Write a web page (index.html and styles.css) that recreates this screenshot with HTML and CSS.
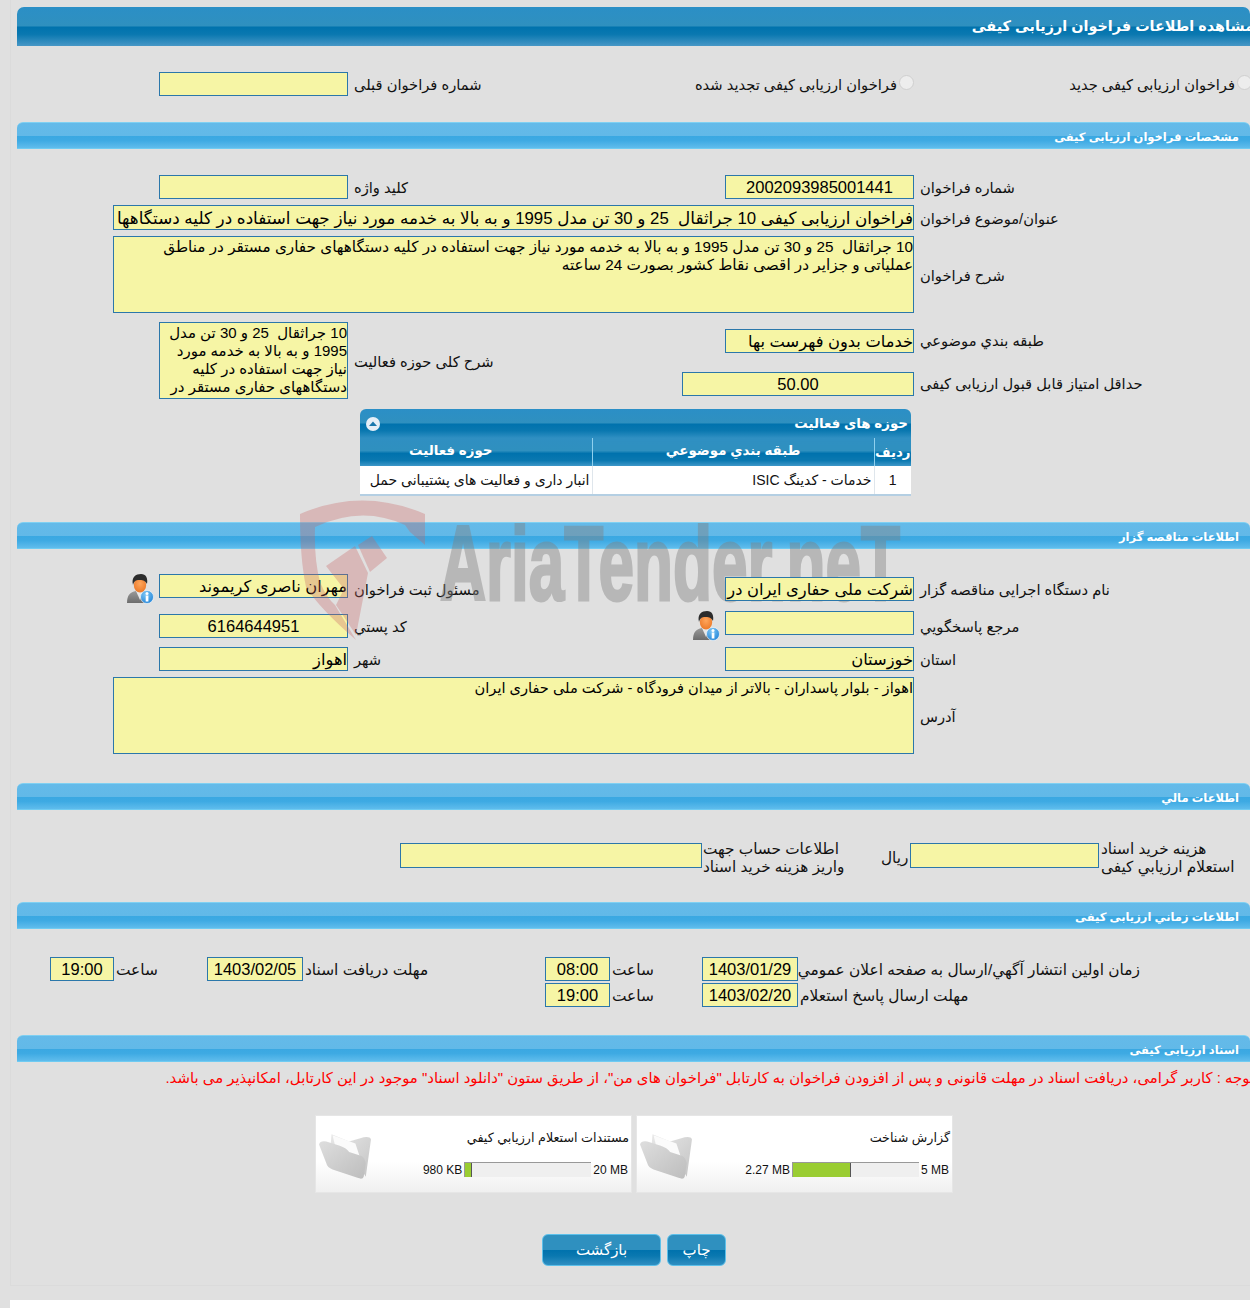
FILE: index.html
```html
<!DOCTYPE html>
<html lang="fa">
<head>
<meta charset="utf-8">
<title>مشاهده اطلاعات فراخوان ارزیابی کیفی</title>
<link rel="stylesheet" href="styles.css">
</head>
<body>
<svg width="0" height="0" class="defs">
  <defs>
    <linearGradient id="folderBack" x1="0" y1="0" x2="1" y2="1"><stop offset="0" stop-color="#e8e8e8"/><stop offset="1" stop-color="#c4c4c4"/></linearGradient>
    <linearGradient id="folderFront" x1="0" y1="0" x2="1" y2="1"><stop offset="0" stop-color="#dedede"/><stop offset="1" stop-color="#bdbdbd"/></linearGradient>
    <radialGradient id="face" cx=".5" cy=".4" r=".6"><stop offset="0" stop-color="#ffa65c"/><stop offset="1" stop-color="#ec7a2a"/></radialGradient>
    <linearGradient id="suit" x1="0" y1="0" x2="0" y2="1"><stop offset="0" stop-color="#9a9a9a"/><stop offset="1" stop-color="#6c6c6c"/></linearGradient>
    <radialGradient id="info" cx=".4" cy=".3" r=".8"><stop offset="0" stop-color="#7cc6f5"/><stop offset="1" stop-color="#1c7fd6"/></radialGradient>
    <symbol id="person" viewBox="0 0 28 30">
      <path d="M1 29 C1 21 4 18 10 17 L18 17 C22 18 23 21 23 29 Z" fill="url(#suit)"/>
      <path d="M10 17 L14 26 L17 17 Z" fill="#e8e8e8"/>
      <ellipse cx="14" cy="11" rx="6.2" ry="7.5" fill="url(#face)"/>
      <path d="M7 11 C5 3 10 0 15 0 C20 0 22 4 21 10 C19 6 16 6 13 6 C10 6 8 7 7 11 Z" fill="#2c2c2c"/>
      <circle cx="21" cy="23" r="6.5" fill="url(#info)" stroke="#fff" stroke-width=".6"/>
      <rect x="19.7" y="21.5" width="2.7" height="6" fill="#fff"/>
      <circle cx="21" cy="19.4" r="1.5" fill="#fff"/>
    </symbol>
    <symbol id="folder" viewBox="0 0 52 46">
      <path d="M13 3 L30 10 L44 6 Q50 5 51 8 L46 44 L40 34 L12 16 Z" fill="url(#folderBack)"/>
      <path d="M14 4 L36 12 L42 30 L18 20 Z" fill="#fbfbfb"/>
      <path d="M1 13 Q2 9 8 10 L21 14 Q27 16 30 20 L42 24 Q45 26 46 31 L44 44 Q43 47 38 45 L14 37 Q9 35 8 31 Z" fill="url(#folderFront)"/>
    </symbol>
  </defs>
</svg>

<main class="panel">
  <h1 class="titlebar">مشاهده اطلاعات فراخوان ارزیابی کیفی</h1>

  <div class="form intro">
    <div class="field f-189 c1">&nbsp;</div>
    <div class="label c2">شماره فراخوان قبلی</div>
    <div class="option c3"><span class="radio"></span><span class="optext">فراخوان ارزیابی کیفی تجدید شده</span></div>
    <div class="option c4"><span class="radio"></span><span class="optext">فراخوان ارزیابی کیفی جدید</span></div>
  </div>

  <h2 class="bar bar-a">مشخصات فراخوان ارزیابی کیفی</h2>

  <div class="form row-a">
    <div class="field f-189 c1">&nbsp;</div>
    <div class="label c2">کلید واژه</div>
    <div class="field f-189 c3 center">2002093985001441</div>
    <div class="label c4">شماره فراخوان</div>
  </div>
  <div class="form row-b">
    <div class="field f-wide span3">فراخوان ارزیابی کیفی 10 جراثقال&nbsp; 25 و 30 تن مدل 1995 و به بالا به خدمه مورد نیاز جهت استفاده در کلیه دستگاهها</div>
    <div class="label c4">عنوان/موضوع فراخوان</div>
  </div>
  <div class="form row-c">
    <div class="area f-wide span3">10 جراثقال&nbsp; 25 و 30 تن مدل 1995 و به بالا به خدمه مورد نیاز جهت استفاده در کلیه دستگاههای حفاری مستقر در مناطق<br>عملیاتی و جزایر در اقصی نقاط کشور بصورت 24 ساعته</div>
    <div class="label c4">شرح فراخوان</div>
  </div>
  <div class="form row-d">
    <div class="area f-189 c1 rows2">10 جراثقال&nbsp; 25 و 30 تن مدل<br>1995 و به بالا به خدمه مورد<br>نیاز جهت استفاده در کلیه<br>دستگاههای حفاری مستقر در</div>
    <div class="label c2 rows2">شرح کلی حوزه فعالیت</div>
    <div class="field f-189 c3 strong">خدمات بدون فهرست بها</div>
    <div class="label c4 lab-up">طبقه بندي موضوعي</div>
    <div class="field f-232 c3 center">50.00</div>
    <div class="label c4 lab-down">حداقل امتیاز قابل قبول ارزیابی کیفی</div>
  </div>

  <section class="activity">
    <div class="activity-head">
      <span class="collapse"><svg viewBox="0 0 14 14" width="14" height="14"><circle cx="7" cy="7" r="7" fill="#e6eff7"/><path d="M3 9 L7 4.5 L11 9 Z" fill="#1b78ad"/></svg></span>
      <span>حوزه های فعالیت</span>
    </div>
    <table class="activity-table">
      <thead><tr><th class="col-area">حوزه فعالیت</th><th class="col-class">طبقه بندي موضوعي</th><th class="col-num">ردیف</th></tr></thead>
      <tbody><tr><td class="col-area">انبار داری و فعالیت های پشتیبانی حمل</td><td class="col-class">خدمات - کدینگ ISIC</td><td class="col-num">1</td></tr></tbody>
    </table>
  </section>

  <h2 class="bar bar-b">اطلاعات مناقصه گزار</h2>

  <div class="form row-e">
    <div class="with-icon c1"><svg class="person"><use href="#person"/></svg><div class="field f-189 strong">مهران ناصری کریموند</div></div>
    <div class="label c2">مسئول ثبت فراخوان</div>
    <div class="with-icon c3"><div class="field f-189 strong nudge">شرکت ملی حفاری ایران در</div></div>
    <div class="label c4">نام دستگاه اجرایی مناقصه گزار</div>
  </div>
  <div class="form row-f">
    <div class="with-icon c1"><div class="field f-189 center nudge">6164644951</div></div>
    <div class="label c2">کد پستي</div>
    <div class="with-icon c3"><svg class="person"><use href="#person"/></svg><div class="field f-189">&nbsp;</div></div>
    <div class="label c4">مرجع پاسخگويي</div>
  </div>
  <div class="form row-g">
    <div class="field f-189 c1 strong">اهواز</div>
    <div class="label c2">شهر</div>
    <div class="field f-189 c3 strong">خوزستان</div>
    <div class="label c4">استان</div>
  </div>
  <div class="form row-h">
    <div class="area f-wide span3">اهواز - بلوار پاسداران - بالاتر از میدان فرودگاه - شرکت ملی حفاری ایران</div>
    <div class="label c4">آدرس</div>
  </div>

  <h2 class="bar bar-c">اطلاعات مالي</h2>

  <div class="finance">
    <div class="field">&nbsp;</div>
    <div class="label">اطلاعات حساب جهت<br>واریز هزینه خرید اسناد</div>
    <div class="label">ریال</div>
    <div class="field">&nbsp;</div>
    <div class="label">هزینه خرید اسناد<br>استعلام ارزیابي کیفی</div>
  </div>

  <h2 class="bar bar-d">اطلاعات زماني ارزیابی کیفی</h2>

  <div class="dates dates-first">
    <div class="field center">19:00</div>
    <div class="label">ساعت</div>
    <div class="field center">1403/02/05</div>
    <div class="label">مهلت دریافت اسناد</div>
    <div class="field center">08:00</div>
    <div class="label">ساعت</div>
    <div class="field center">1403/01/29</div>
    <div class="label">زمان اولین انتشار آگهي/ارسال به صفحه اعلان عمومي</div>
  </div>
  <div class="dates dates-second">
    <div class="blank"></div>
    <div class="blank"></div>
    <div class="blank"></div>
    <div class="blank"></div>
    <div class="field center">19:00</div>
    <div class="label">ساعت</div>
    <div class="field center">1403/02/20</div>
    <div class="label">مهلت ارسال پاسخ استعلام</div>
  </div>

  <h2 class="bar bar-e">اسناد ارزیابی کیفی</h2>

  <p class="notice">توجه : کاربر گرامی، دریافت اسناد در مهلت قانونی و پس از افزودن فراخوان به کارتابل "فراخوان های من"، از طریق ستون "دانلود اسناد" موجود در این کارتابل، امکانپذیر می باشد.</p>

  <div class="cards">
    <article class="card">
      <svg class="folder"><use href="#folder"/></svg>
      <div class="card-title">مستندات استعلام ارزیابي کیفي</div>
      <div class="meter"><span class="used">980 KB</span><span class="track"><span class="fill" style="width:5%"></span></span><span class="max">20 MB</span></div>
    </article>
    <article class="card">
      <svg class="folder"><use href="#folder"/></svg>
      <div class="card-title">گزارش شناخت</div>
      <div class="meter"><span class="used">2.27 MB</span><span class="track"><span class="fill" style="width:46%"></span></span><span class="max">5 MB</span></div>
    </article>
  </div>

  <div class="actions">
    <button class="btn btn-back" type="button">بازگشت</button>
    <button class="btn btn-print" type="button">چاپ</button>
  </div>
</main>
<div class="page-end"></div>

<svg class="mark-text" viewBox="0 0 470 90">
  <text x="0" y="77" textLength="460" lengthAdjust="spacingAndGlyphs">AriaTender.neT</text>
</svg>
<svg class="mark-shield" viewBox="0 0 126 142">
  <path d="M0 15 Q62 -12 125 15 L125 46 L110 33 L105 26 Q62 6 15 28 Q14 60 20 83 Q26 98 35 106 L56 141 Q20 110 6 88 Q0 60 0 15 Z"/>
  <path d="M58 46 L72 37 L87 59 L70 73 Z"/>
  <path d="M26 67 L55 47 L68 74 L56 136 L36 106 L44 90 Z"/>
</svg>
</body>
</html>
```
FILE: styles.css
```css
html, body { margin: 0; padding: 0; }
html { overflow: hidden; height: 1308px; }
body {
  position: relative;
  width: 1250px;
  height: 1308px;
  overflow: hidden;
  background: #e0e0e0;
  color: #111;
  font-family: "Liberation Sans", "DejaVu Sans", sans-serif;
  font-size: 14px;
}
.defs { position: absolute; }

.panel {
  box-sizing: border-box;
  width: 1240px;
  height: 1286px;
  margin-left: 10px;
  padding: 7px 0 0 7px;
  border-left: 1px solid #dbdbdb;
  border-bottom: 1px solid #dbdbdb;
}
.page-end { height: 8px; margin: 14px 0 0 10px; background: #fff; }

.titlebar {
  box-sizing: border-box;
  width: 1233px;
  height: 39px;
  margin: 0 0 0 -1px;
  padding: 11px 0 0;
  direction: rtl;
  white-space: nowrap;
  text-indent: -4px;
  color: #fff;
  font-size: 14.4px;
  font-weight: bold;
  border-radius: 7px 7px 0 0;
  background: linear-gradient(#2b8fc6 0, #2f90bf 49%, #0072ad 51%, #0a78b0 70%, #4797c6 100%);
}

.bar {
  position: relative;
  box-sizing: border-box;
  width: 1233px;
  height: 27px;
  margin: 0 0 0 -1px;
  padding: 7px 11px 0 0;
  direction: rtl;
  color: #fff;
  font-size: 11.5px;
  font-weight: bold;
  border-top: 1px solid #7fd0f2;
  border-bottom: 1px solid #6fcbf2;
  border-radius: 6px 6px 0 0;
  background: linear-gradient(#64bae9 0, #62b9e8 50%, #3aa8e2 52%, #3eaae3 70%, #5fbcec 100%);
}
.bar-a { margin-top: 26px; }
.bar-b { margin-top: 26px; }
.bar-c { margin-top: 29px; }
.bar-d { margin-top: 28px; }
.bar-e { margin-top: 28px; }

.form {
  display: grid;
  grid-template-columns: 331px 200px 354px 330px;
  column-gap: 6px;
  margin-left: -1px;
}
.c1 { grid-column: 1; justify-self: end; }
.c2 { grid-column: 2; }
.c3 { grid-column: 3; justify-self: end; }
.c4 { grid-column: 4; }
.span3 { grid-column: 1 / 4; justify-self: end; }
.rows2 { grid-row: 1 / 3; }

.intro { margin-top: 26px; height: 24px; }
.row-a { margin-top: 26px; height: 24px; }
.row-b { margin-top: 6px; height: 25px; }
.row-c { margin-top: 6px; height: 77px; }
.row-d { margin-top: 9px; grid-template-rows: 43px 34px; }
.row-d .c3 { margin-top: 7px; }
.row-e { margin-top: 25px; height: 30px; }
.row-f { margin-top: 7px; height: 30px; }
.row-g { margin-top: 6px; height: 24px; }
.row-h { margin-top: 6px; height: 77px; }

.label {
  align-self: center;
  direction: rtl;
  text-align: left;
  font-size: 14.7px;
  line-height: 18px;
  white-space: nowrap;
  padding-top: 2px;
}
.c4.label, .c2.label { justify-self: start; }
.lab-up { margin-top: -8px; }
.lab-down { margin-top: 2px; }

.field, .area {
  position: relative;
  z-index: 2;
  box-sizing: border-box;
  direction: rtl;
  overflow: hidden;
  white-space: nowrap;
  border: 1px solid #2b77aa;
  background: #f6f5a5;
  color: #000;
  font-size: 16px;
  line-height: 23px;
}
.f-189 { width: 189px; height: 24px; }
.f-232 { width: 232px; height: 24px; }
.f-wide { width: 801px; }
.area { height: 77px; padding-top: 1px; font-size: 15px; line-height: 18px; }
.row-c .area { font-size: 15.25px; }
.row-h .area { font-size: 14.6px; }
.center { text-align: center; font-size: 16.5px; }
.strong { font-size: 16.3px; }
.row-b .field { height: 25px; font-size: 16.8px; line-height: 26px; }

.with-icon { display: flex; align-items: flex-start; gap: 5px; }
.person { width: 28px; height: 30px; }
.nudge { margin-top: 3px; }

.option { display: flex; justify-content: flex-end; align-items: flex-start; gap: 2px; white-space: nowrap; font-size: 14.7px; }
.c4.option { margin-right: -2px; }
.radio {
  order: 2;
  box-sizing: border-box;
  width: 15px;
  height: 15px;
  margin-top: 3px;
  border: 1px solid #cfcfcf;
  border-radius: 50%;
  background: #ededed;
}
.optext { direction: rtl; line-height: 18px; padding-top: 4px; }

.activity {
  width: 551px;
  margin: 10px 0 0 342px;
  border-radius: 6px 6px 0 0;
  border-bottom: 2px solid #b4cfe3;
  overflow: hidden;
}
.activity-head {
  display: flex;
  justify-content: space-between;
  align-items: center;
  box-sizing: border-box;
  height: 29px;
  padding: 0 3px 0 6px;
  color: #fff;
  font-size: 13.4px;
  font-weight: bold;
  direction: ltr;
  background: linear-gradient(#2b8fc6 0, #2f90bf 49%, #0072ad 51%, #0a78b0 75%, #2f8fc2 100%);
}
.activity-head span:last-child { direction: rtl; }
.collapse { display: block; height: 14px; }
.activity-table { width: 551px; border-collapse: collapse; table-layout: fixed; }
.activity-table th {
  box-sizing: border-box;
  height: 28px;
  padding: 0 0 3px;
  color: #fff;
  font-size: 13.4px;
  font-weight: bold;
  direction: rtl;
  border-left: 1px solid #8fd0ee;
  background: linear-gradient(#2f8fc2 0, #2f90bf 45%, #0072ad 55%, #0a78b0 80%, #3d97c8 100%);
}
.activity-table th.col-num { padding-bottom: 0; }
.activity-table th:first-child, .activity-table td:first-child { border-left: 0; }
.activity-table th.col-area { padding-right: 50px; }
.activity-table td {
  height: 28px;
  padding: 0 2px;
  background: #fff;
  font-size: 14px;
  direction: rtl;
  text-align: right;
  white-space: nowrap;
  overflow: hidden;
  border-left: 1px solid #dfe6ec;
}
.col-area { width: 232px; }
.col-num { width: 37px; }
.activity-table td.col-num { text-align: center; font-size: 14px; }

.finance {
  display: grid;
  grid-template-columns: 302px 177px 28px 189px 150px;
  column-gap: 1px;
  align-items: center;
  height: 36px;
  margin: 28px 0 0 382px;
}
.finance .field { height: 25px; margin-top: -3px; }
.finance .label { font-size: 15.3px; }
.finance .label:last-child { margin-left: 1px; }

.dates {
  display: grid;
  grid-template-columns: 64px 89px 96px 238px 65px 88px 96px 340px;
  column-gap: 2px;
  height: 24px;
  margin-left: 32px;
}
.dates-first { margin-top: 28px; }
.dates-second { margin-top: 2px; }
.dates .label { font-size: 15.4px; }

.notice {
  box-sizing: border-box;
  width: 1237px;
  height: 20px;
  margin: 6px 0 0 -1px;
  direction: rtl;
  white-space: nowrap;
  color: #f00;
  font-size: 14.9px;
  line-height: 20px;
}

.cards {
  display: flex;
  gap: 4px;
  margin: 27px 0 0 297px;
}
.card {
  position: relative;
  box-sizing: border-box;
  width: 317px;
  height: 78px;
  padding: 13px 2px 0 54px;
  direction: rtl;
  border: 1px solid #e6e6e6;
  background: linear-gradient(#fff 0, #fff 60%, #f0f0f0 100%);
}
.folder { position: absolute; left: 2px; top: 15px; width: 54px; height: 48px; }
.card-title { height: 18px; font-size: 12.7px; line-height: 18px; white-space: nowrap; }
.meter {
  display: flex;
  align-items: center;
  justify-content: flex-start;
  gap: 2px;
  margin-top: 15px;
  margin-right: 1px;
  direction: ltr;
  font-size: 12px;
  height: 15px;
}
.used { margin-left: auto; white-space: nowrap; }
.max { white-space: nowrap; }
.track {
  display: block;
  box-sizing: border-box;
  width: 127px;
  height: 15px;
  border-top: 1px solid #999;
  border-left: 1px solid #999;
  background: #efefef;
}
.fill {
  display: block;
  box-sizing: border-box;
  height: 14px;
  background: #9acd32;
  border-right: 1px solid #555;
}

.actions {
  display: flex;
  gap: 6px;
  margin: 41px 0 0 524px;
}
.btn {
  box-sizing: border-box;
  height: 32px;
  padding: 0;
  direction: rtl;
  color: #fff;
  font-family: inherit;
  font-size: 15px;
  border: 1px solid #5cc0ea;
  border-radius: 6px;
  background: linear-gradient(#2f90bf 0, #2f90bf 49%, #0072ad 51%, #0a78b0 70%, #2f8fc2 100%);
}
.btn-back { width: 119px; }
.btn-print { width: 59px; }

.mark-text {
  position: absolute;
  z-index: 1;
  left: 440px;
  top: 523px;
  width: 470px;
  height: 90px;
  opacity: .42;
  pointer-events: none;
}
.mark-text text {
  fill: #808080;
  stroke: #808080;
  stroke-width: 3px;
  font-family: "Liberation Sans", sans-serif;
  font-size: 106px;
  font-weight: bold;
}
.mark-shield {
  position: absolute;
  z-index: 3;
  left: 300px;
  top: 499px;
  width: 126px;
  height: 142px;
  pointer-events: none;
}
.mark-shield path { fill: #c86464; fill-opacity: .32; }
```
